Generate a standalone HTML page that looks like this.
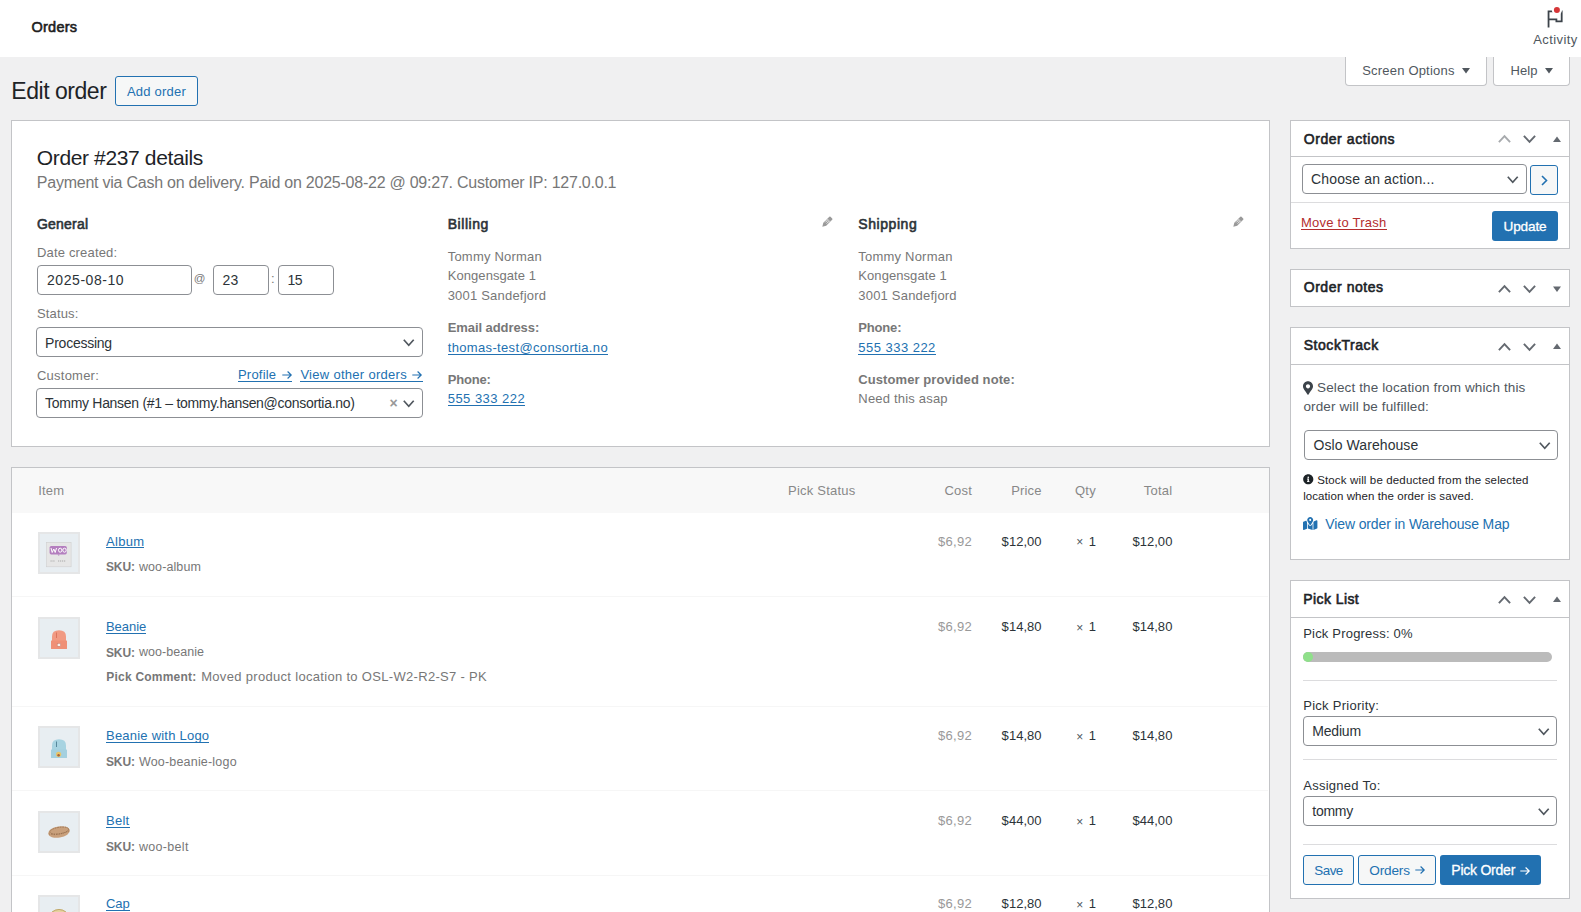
<!DOCTYPE html><html><head><meta charset="utf-8"><style>
html,body{margin:0;padding:0;}
body{width:1581px;height:912px;overflow:hidden;position:relative;background:#f0f0f1;font-family:"Liberation Sans",sans-serif;}
</style></head><body>
<div style="position:absolute;left:0px;top:0px;width:1581px;height:57px;box-sizing:border-box;background:#fff;"></div>
<svg style="position:absolute;left:1540px;top:2px" width="30" height="30" viewBox="0 0 30 30">
<path d="M8.55 25.4 V9.4 H21.7 V19.4 H16.4 V17.3 H8.55" fill="none" stroke="#3c434a" stroke-width="1.8"/>
<circle cx="16.9" cy="7.9" r="5.1" fill="#fff"/><circle cx="16.9" cy="7.9" r="3" fill="#d63638"/>
</svg>
<div style="position:absolute;left:1345px;top:57px;width:142px;height:29px;box-sizing:border-box;background:#fff;border:1px solid #c3c4c7;border-top:none;border-radius:0 0 4px 4px;"></div>
<svg style="position:absolute;left:1462px;top:68px" width="8" height="6"><path d="M0 0 H8 L4 5.5 Z" fill="#50575e"/></svg>
<div style="position:absolute;left:1493px;top:57px;width:77px;height:29px;box-sizing:border-box;background:#fff;border:1px solid #c3c4c7;border-top:none;border-radius:0 0 4px 4px;"></div>
<svg style="position:absolute;left:1545.3px;top:68px" width="8" height="6"><path d="M0 0 H8 L4 5.5 Z" fill="#50575e"/></svg>
<div style="position:absolute;left:115px;top:76px;width:83px;height:30px;box-sizing:border-box;background:#f6f7f7;border:1px solid #2271b1;border-radius:3px;"></div>
<div style="position:absolute;left:11px;top:120px;width:1259px;height:327px;box-sizing:border-box;background:#fff;border:1px solid #c3c4c7;"></div>
<div style="position:absolute;left:37px;top:265px;width:155px;height:30px;box-sizing:border-box;border:1px solid #8c8f94;border-radius:4px;background:#fff;"></div>
<div style="position:absolute;left:213px;top:265px;width:56px;height:30px;box-sizing:border-box;border:1px solid #8c8f94;border-radius:4px;background:#fff;"></div>
<div style="position:absolute;left:278px;top:265px;width:56px;height:30px;box-sizing:border-box;border:1px solid #8c8f94;border-radius:4px;background:#fff;"></div>
<div style="position:absolute;left:36px;top:327px;width:387px;height:30px;box-sizing:border-box;border:1px solid #8c8f94;border-radius:4px;background:#fff;"></div>
<svg style="position:absolute;left:403.3px;top:338.5px;overflow:visible" width="11.5" height="7"><path d="M0.8 0.8 L5.75 6.2 L10.7 0.8" fill="none" stroke="#50575e" stroke-width="1.7"/></svg>
<div style="position:absolute;left:238.0px;top:381px;width:53.8px;height:1px;background:#2271b1"></div>
<div style="position:absolute;left:300.4px;top:381px;width:122.3px;height:1px;background:#2271b1"></div>
<div style="position:absolute;left:36px;top:388px;width:387px;height:30px;box-sizing:border-box;border:1px solid #8c8f94;border-radius:4px;background:#fff;"></div>
<svg style="position:absolute;left:403.3px;top:400px;overflow:visible" width="11.5" height="7"><path d="M0.8 0.8 L5.75 6.2 L10.7 0.8" fill="none" stroke="#50575e" stroke-width="1.7"/></svg>
<svg style="position:absolute;left:821.8px;top:215.5px" width="11" height="11" viewBox="0 0 11 11">
<path d="M0.3 10.7 L1.3 6.8 L7.3 0.8 Q7.9 0.3 8.5 0.8 L10.2 2.5 Q10.7 3.1 10.2 3.7 L4.2 9.7 Z" fill="#999"/>
<path d="M3 6.6 L6.3 3.3 M4.3 7.9 L7.6 4.6 M3.6 4.3 L6.4 7.1 M4.8 3.1 L7.6 5.9" stroke="#fff" stroke-width="0.55"/></svg>
<svg style="position:absolute;left:1232.6px;top:215.5px" width="11" height="11" viewBox="0 0 11 11">
<path d="M0.3 10.7 L1.3 6.8 L7.3 0.8 Q7.9 0.3 8.5 0.8 L10.2 2.5 Q10.7 3.1 10.2 3.7 L4.2 9.7 Z" fill="#999"/>
<path d="M3 6.6 L6.3 3.3 M4.3 7.9 L7.6 4.6 M3.6 4.3 L6.4 7.1 M4.8 3.1 L7.6 5.9" stroke="#fff" stroke-width="0.55"/></svg>
<div style="position:absolute;left:447.7px;top:354px;width:160.3px;height:1px;background:#2271b1"></div>
<div style="position:absolute;left:447.7px;top:405px;width:77.5px;height:1px;background:#2271b1"></div>
<div style="position:absolute;left:858.3px;top:354px;width:77.5px;height:1px;background:#2271b1"></div>
<div style="position:absolute;left:11px;top:467px;width:1259px;height:533px;box-sizing:border-box;background:#fff;border:1px solid #c3c4c7;"></div>
<div style="position:absolute;left:12px;top:468px;width:1257px;height:45px;box-sizing:border-box;background:#f8f8f8;"></div>
<div style="position:absolute;left:38px;top:532px;width:42px;height:42px;box-sizing:border-box;background:#e8eef2;border:2px solid #e5e6e7;"></div>
<svg style="position:absolute;left:38px;top:532px" width="42" height="42" viewBox="0 0 42 42"><rect x="8.6" y="10.3" width="24.5" height="24.5" fill="#e6e6e6" stroke="#cfcfcf" stroke-width="0.6"/><rect x="11.6" y="13.9" width="17.2" height="8.5" rx="1.6" fill="#b47fbf"/><path d="M13 16 L14.2 20.5 L15.8 17 L17.2 20.5 L18.5 16 M20.5 18.2 a1.7 2 0 1 0 3.4 0 a1.7 2 0 1 0 -3.4 0 M24.8 18.2 a1.7 2 0 1 0 3.4 0 a1.7 2 0 1 0 -3.4 0" fill="none" stroke="#fff" stroke-width="1"/><path d="M19.5 22.4 L21 24 L21.5 22.4" fill="#b47fbf"/><path d="M12.5 29 H17 M20 29 H28" stroke="#999" stroke-width="0.8" stroke-dasharray="1.2 0.8"/></svg>
<div style="position:absolute;left:106.0px;top:547px;width:38.3px;height:1px;background:#2271b1"></div>
<div style="position:absolute;left:12px;top:596px;width:1256px;height:1px;box-sizing:border-box;background:#f6f6f6;"></div>
<div style="position:absolute;left:38px;top:617px;width:42px;height:42px;box-sizing:border-box;background:#e8eef2;border:2px solid #e5e6e7;"></div>
<svg style="position:absolute;left:38px;top:617px" width="42" height="42" viewBox="0 0 42 42"><path d="M14 24 V19.5 Q14 13.2 21 13.2 Q28 13.2 28 19.5 V24 Z" fill="#f19a83"/><rect x="13" y="23.5" width="16" height="8.6" rx="0.5" fill="#ef9077"/><path d="M18.5 15.5 V21" stroke="#d9705a" stroke-width="0.9"/><rect x="19.2" y="26.3" width="3.5" height="3" fill="#f7efe9" stroke="#c7705f" stroke-width="0.5"/></svg>
<div style="position:absolute;left:106.0px;top:633px;width:40.2px;height:1px;background:#2271b1"></div>
<div style="position:absolute;left:12px;top:706px;width:1256px;height:1px;box-sizing:border-box;background:#f6f6f6;"></div>
<div style="position:absolute;left:38px;top:726px;width:42px;height:42px;box-sizing:border-box;background:#e8eef2;border:2px solid #e5e6e7;"></div>
<svg style="position:absolute;left:38px;top:726px" width="42" height="42" viewBox="0 0 42 42"><path d="M14 24 V19.5 Q14 13.2 21 13.2 Q28 13.2 28 19.5 V24 Z" fill="#a7d3e1"/><rect x="13" y="23.5" width="16" height="8.6" rx="0.5" fill="#a4d0df"/><path d="M18.5 15.5 V21" stroke="#4e7f94" stroke-width="0.9"/><circle cx="20.6" cy="28.3" r="2.6" fill="#e8c56a"/><circle cx="20.6" cy="29.3" r="1.2" fill="#a8643b"/></svg>
<div style="position:absolute;left:106.0px;top:742px;width:103.3px;height:1px;background:#2271b1"></div>
<div style="position:absolute;left:12px;top:790px;width:1256px;height:1px;box-sizing:border-box;background:#f6f6f6;"></div>
<div style="position:absolute;left:38px;top:811px;width:42px;height:42px;box-sizing:border-box;background:#e8eef2;border:2px solid #e5e6e7;"></div>
<svg style="position:absolute;left:38px;top:811px" width="42" height="42" viewBox="0 0 42 42"><ellipse cx="21" cy="21" rx="11" ry="5.6" transform="rotate(-9 21 21)" fill="#c9a07c"/><ellipse cx="21.5" cy="19.6" rx="9.5" ry="3.2" transform="rotate(-9 21 21)" fill="none" stroke="#9c7452" stroke-width="0.9" stroke-dasharray="1.6 0.9"/><path d="M11 23 Q20 25 31 20" stroke="#8c6446" stroke-width="0.7" fill="none" stroke-dasharray="1.2 1.2"/></svg>
<div style="position:absolute;left:106.0px;top:827px;width:23.5px;height:1px;background:#2271b1"></div>
<div style="position:absolute;left:12px;top:875px;width:1256px;height:1px;box-sizing:border-box;background:#f6f6f6;"></div>
<div style="position:absolute;left:38px;top:895px;width:42px;height:42px;box-sizing:border-box;background:#e8eef2;border:2px solid #e5e6e7;"></div>
<svg style="position:absolute;left:38px;top:895px" width="42" height="42" viewBox="0 0 42 42"><path d="M12.5 21 A8.5 7 0 0 1 29.5 21 Z" fill="#e6d29f"/><path d="M14 17 Q21 12 28 17" stroke="#b49a5a" stroke-width="0.8" fill="none"/></svg>
<div style="position:absolute;left:106.0px;top:910px;width:23.5px;height:1px;background:#2271b1"></div>
<div style="position:absolute;left:1290px;top:120px;width:280px;height:129px;box-sizing:border-box;background:#fff;border:1px solid #c3c4c7;"></div>
<div style="position:absolute;left:1291px;top:156px;width:278px;height:1px;box-sizing:border-box;background:#c3c4c7;"></div>
<svg style="position:absolute;left:1497.5px;top:135.3px;overflow:visible" width="13" height="8"><path d="M0.9 7.2 L6.5 1.2 L12.1 7.2" fill="none" stroke="#a7aaad" stroke-width="1.9"/></svg>
<svg style="position:absolute;left:1523.3px;top:135.3px;overflow:visible" width="13" height="8"><path d="M0.9 0.8 L6.5 6.8 L12.1 0.8" fill="none" stroke="#646970" stroke-width="1.9"/></svg>
<svg style="position:absolute;left:1552.6px;top:135.5px" width="8" height="7"><path d="M0 6 H8 L4 0.5 Z" fill="#646970"/></svg>
<div style="position:absolute;left:1302px;top:164px;width:225px;height:30px;box-sizing:border-box;border:1px solid #8c8f94;border-radius:4px;background:#fff;"></div>
<svg style="position:absolute;left:1507px;top:175.5px;overflow:visible" width="11.5" height="7"><path d="M0.8 0.8 L5.75 6.2 L10.7 0.8" fill="none" stroke="#50575e" stroke-width="1.7"/></svg>
<div style="position:absolute;left:1530px;top:165px;width:28px;height:30px;box-sizing:border-box;border:1px solid #2271b1;border-radius:3px;background:#f6f7f7;"></div>
<svg style="position:absolute;left:1540.5px;top:175px" width="7" height="11"><path d="M1 1 L5.5 5.5 L1 10" fill="none" stroke="#2271b1" stroke-width="1.6"/></svg>
<div style="position:absolute;left:1291px;top:202px;width:278px;height:1px;box-sizing:border-box;background:#dcdcde;"></div>
<div style="position:absolute;left:1301.0px;top:229px;width:85.5px;height:1px;background:#b32d2e"></div>
<div style="position:absolute;left:1492px;top:211px;width:66px;height:30px;box-sizing:border-box;background:#2271b1;border-radius:3px;"></div>
<div style="position:absolute;left:1290px;top:269px;width:280px;height:38px;box-sizing:border-box;background:#fff;border:1px solid #c3c4c7;"></div>
<svg style="position:absolute;left:1497.5px;top:284.6px;overflow:visible" width="13" height="8"><path d="M0.9 7.2 L6.5 1.2 L12.1 7.2" fill="none" stroke="#646970" stroke-width="1.9"/></svg>
<svg style="position:absolute;left:1523.3px;top:284.6px;overflow:visible" width="13" height="8"><path d="M0.9 0.8 L6.5 6.8 L12.1 0.8" fill="none" stroke="#646970" stroke-width="1.9"/></svg>
<svg style="position:absolute;left:1552.6px;top:285.8px" width="8" height="7"><path d="M0 0.5 H8 L4 6 Z" fill="#646970"/></svg>
<div style="position:absolute;left:1290px;top:327px;width:280px;height:233px;box-sizing:border-box;background:#fff;border:1px solid #c3c4c7;"></div>
<div style="position:absolute;left:1291px;top:364px;width:278px;height:1px;box-sizing:border-box;background:#c3c4c7;"></div>
<svg style="position:absolute;left:1497.5px;top:342.6px;overflow:visible" width="13" height="8"><path d="M0.9 7.2 L6.5 1.2 L12.1 7.2" fill="none" stroke="#646970" stroke-width="1.9"/></svg>
<svg style="position:absolute;left:1523.3px;top:342.6px;overflow:visible" width="13" height="8"><path d="M0.9 0.8 L6.5 6.8 L12.1 0.8" fill="none" stroke="#646970" stroke-width="1.9"/></svg>
<svg style="position:absolute;left:1552.6px;top:342.8px" width="8" height="7"><path d="M0 6 H8 L4 0.5 Z" fill="#646970"/></svg>
<svg style="position:absolute;left:1303.4px;top:380.5px" width="10" height="14" viewBox="0 0 384 512"><path fill="#3c434a" d="M172.3 501.7C27 291 0 269.4 0 192 0 86 86 0 192 0s192 86 192 192c0 77.4-27 99-172.3 309.7-9.5 13.8-29.9 13.8-39.5 0zM192 272c44.2 0 80-35.8 80-80s-35.8-80-80-80-80 35.8-80 80 35.8 80 80 80z"/></svg>
<div style="position:absolute;left:1304px;top:430px;width:254px;height:30px;box-sizing:border-box;border:1px solid #8c8f94;border-radius:4px;background:#fff;"></div>
<svg style="position:absolute;left:1538.5px;top:441.5px;overflow:visible" width="11.5" height="7"><path d="M0.8 0.8 L5.75 6.2 L10.7 0.8" fill="none" stroke="#50575e" stroke-width="1.7"/></svg>
<svg style="position:absolute;left:1303px;top:474px" width="10.5" height="10.5" viewBox="0 0 512 512"><path fill="#1d2327" d="M256 8C119 8 8 119 8 256s111 248 248 248 248-111 248-248S393 8 256 8zm0 110c23.2 0 42 18.8 42 42s-18.8 42-42 42-42-18.8-42-42 18.8-42 42-42zm56 254c0 6.6-5.4 12-12 12h-88c-6.6 0-12-5.4-12-12v-24c0-6.6 5.4-12 12-12h12v-64h-12c-6.6 0-12-5.4-12-12v-24c0-6.6 5.4-12 12-12h64c6.6 0 12 5.4 12 12v100h12c6.6 0 12 5.4 12 12v24z"/></svg>
<svg style="position:absolute;left:1303px;top:517.3px" width="16" height="13.2" preserveAspectRatio="none" viewBox="0 0 640 512"><path fill="#2271b1" d="M408 120c0 54.6-73.1 151.9-105.2 192c-7.7 9.6-22 9.6-29.6 0C241.1 271.9 168 174.6 168 120C168 53.7 221.7 0 288 0s120 53.7 120 120zm8 80.4c3.5-6.9 6.7-13.8 9.6-20.6c.5-1.2 1-2.5 1.5-3.7l116-46.4C558.9 123.4 576 135 576 152V422.8c0 9.8-6 18.6-15.1 22.3L416 503V200.4zM137.6 138.3c2.4 14.1 7.2 28.3 12.8 41.5c2.9 6.8 6.1 13.7 9.6 20.6V451.8L32.9 502.7C17.1 509 0 497.4 0 480.4V209.6c0-9.8 6-18.6 15.1-22.3l122.6-49zM327.8 332c13.9-17.4 35.7-45.7 56.2-77V504.3L192 449.4V255c20.5 31.3 42.3 59.6 56.2 77c20.5 25.6 59.1 25.6 79.6 0zM288 152a40 40 0 1 0 0-80 40 40 0 1 0 0 80z"/></svg>
<div style="position:absolute;left:1290px;top:580px;width:280px;height:319px;box-sizing:border-box;background:#fff;border:1px solid #c3c4c7;"></div>
<div style="position:absolute;left:1291px;top:617px;width:278px;height:1px;box-sizing:border-box;background:#c3c4c7;"></div>
<svg style="position:absolute;left:1497.5px;top:595.5999999999999px;overflow:visible" width="13" height="8"><path d="M0.9 7.2 L6.5 1.2 L12.1 7.2" fill="none" stroke="#646970" stroke-width="1.9"/></svg>
<svg style="position:absolute;left:1523.3px;top:595.5999999999999px;overflow:visible" width="13" height="8"><path d="M0.9 0.8 L6.5 6.8 L12.1 0.8" fill="none" stroke="#646970" stroke-width="1.9"/></svg>
<svg style="position:absolute;left:1552.6px;top:595.8px" width="8" height="7"><path d="M0 6 H8 L4 0.5 Z" fill="#646970"/></svg>
<div style="position:absolute;left:1303px;top:652px;width:249px;height:10px;box-sizing:border-box;background:#bbb;border-radius:5px;"></div>
<div style="position:absolute;left:1303px;top:652px;width:10px;height:10px;box-sizing:border-box;background:#8fe08a;border-radius:5px;"></div>
<div style="position:absolute;left:1303px;top:680px;width:254px;height:1px;box-sizing:border-box;background:#dcdcde;"></div>
<div style="position:absolute;left:1303px;top:716px;width:254px;height:30px;box-sizing:border-box;border:1px solid #8c8f94;border-radius:4px;background:#fff;"></div>
<svg style="position:absolute;left:1537.8px;top:728px;overflow:visible" width="11.5" height="7"><path d="M0.8 0.8 L5.75 6.2 L10.7 0.8" fill="none" stroke="#50575e" stroke-width="1.7"/></svg>
<div style="position:absolute;left:1303px;top:759px;width:254px;height:1px;box-sizing:border-box;background:#dcdcde;"></div>
<div style="position:absolute;left:1303px;top:796px;width:254px;height:30px;box-sizing:border-box;border:1px solid #8c8f94;border-radius:4px;background:#fff;"></div>
<svg style="position:absolute;left:1537.8px;top:807.5px;overflow:visible" width="11.5" height="7"><path d="M0.8 0.8 L5.75 6.2 L10.7 0.8" fill="none" stroke="#50575e" stroke-width="1.7"/></svg>
<div style="position:absolute;left:1303px;top:844px;width:254px;height:1px;box-sizing:border-box;background:#dcdcde;"></div>
<div style="position:absolute;left:1303px;top:855px;width:51px;height:30px;box-sizing:border-box;border:1px solid #2271b1;border-radius:3px;background:#f6f7f7;"></div>
<div style="position:absolute;left:1358px;top:855px;width:78px;height:30px;box-sizing:border-box;border:1px solid #2271b1;border-radius:3px;background:#f6f7f7;"></div>
<div style="position:absolute;left:1440px;top:855px;width:101px;height:30px;box-sizing:border-box;background:#2271b1;border-radius:3px;"></div>
<div id=t0 style="position:absolute;left:31.6px;top:19.72px;font-size:14.5px;line-height:14.5px;font-weight:400;-webkit-text-stroke:0.6px #1e1e1e;color:#1e1e1e;white-space:nowrap;letter-spacing:0.212px;">Orders</div>
<div id=t1 style="position:absolute;left:1533.2px;top:32.59px;font-size:13px;line-height:13px;font-weight:400;color:#50575e;white-space:nowrap;letter-spacing:0.404px;">Activity</div>
<div id=t2 style="position:absolute;left:1362.2px;top:63.59px;font-size:13px;line-height:13px;font-weight:400;color:#50575e;white-space:nowrap;letter-spacing:0.199px;">Screen Options</div>
<div id=t3 style="position:absolute;left:1510.5px;top:63.59px;font-size:13px;line-height:13px;font-weight:400;color:#50575e;white-space:nowrap;letter-spacing:0.088px;">Help</div>
<div id=t4 style="position:absolute;left:11.3px;top:79.73px;font-size:23px;line-height:23px;font-weight:400;color:#1d2327;white-space:nowrap;letter-spacing:-0.462px;">Edit order</div>
<div id=t5 style="position:absolute;left:126.9px;top:84.79px;font-size:13px;line-height:13px;font-weight:400;color:#2271b1;white-space:nowrap;letter-spacing:0.234px;">Add order</div>
<div id=t6 style="position:absolute;left:36.8px;top:147.22px;font-size:21px;line-height:21px;font-weight:400;color:#1d2327;white-space:nowrap;letter-spacing:-0.366px;">Order #237 details</div>
<div id=t7 style="position:absolute;left:36.8px;top:175.15px;font-size:16px;line-height:16px;font-weight:400;color:#777;white-space:nowrap;letter-spacing:-0.238px;">Payment via Cash on delivery. Paid on 2025-08-22 @ 09:27. Customer IP: 127.0.0.1</div>
<div id=t8 style="position:absolute;left:37px;top:217.15px;font-size:14px;line-height:14px;font-weight:400;-webkit-text-stroke:0.6px #2c3338;color:#2c3338;white-space:nowrap;letter-spacing:0.198px;">General</div>
<div id=t9 style="position:absolute;left:37px;top:245.99px;font-size:13px;line-height:13px;font-weight:400;color:#777;white-space:nowrap;letter-spacing:0.173px;">Date created:</div>
<div id=t10 style="position:absolute;left:47px;top:272.75px;font-size:14px;line-height:14px;font-weight:400;color:#2c3338;white-space:nowrap;letter-spacing:0.558px;">2025-08-10</div>
<div id=t11 style="position:absolute;left:193.8px;top:273.26px;font-size:11.5px;line-height:11.5px;font-weight:400;color:#777;white-space:nowrap;letter-spacing:0.000px;">@</div>
<div id=t12 style="position:absolute;left:222.6px;top:272.75px;font-size:14px;line-height:14px;font-weight:400;color:#2c3338;white-space:nowrap;letter-spacing:0.211px;">23</div>
<div id=t13 style="position:absolute;left:271px;top:271.99px;font-size:13px;line-height:13px;font-weight:400;color:#777;white-space:nowrap;letter-spacing:0.000px;">:</div>
<div id=t14 style="position:absolute;left:287.6px;top:272.75px;font-size:14px;line-height:14px;font-weight:400;color:#2c3338;white-space:nowrap;letter-spacing:-0.539px;">15</div>
<div id=t15 style="position:absolute;left:37px;top:307.29px;font-size:13px;line-height:13px;font-weight:400;color:#777;white-space:nowrap;letter-spacing:0.147px;">Status:</div>
<div id=t16 style="position:absolute;left:45.1px;top:335.65px;font-size:14px;line-height:14px;font-weight:400;color:#2c3338;white-space:nowrap;letter-spacing:-0.247px;">Processing</div>
<div id=t17 style="position:absolute;left:37px;top:369.29px;font-size:13px;line-height:13px;font-weight:400;color:#777;white-space:nowrap;letter-spacing:0.226px;">Customer:</div>
<div id=t18 style="position:absolute;left:238px;top:368.49px;font-size:13px;line-height:13px;font-weight:400;color:#2271b1;white-space:nowrap;letter-spacing:0.203px;">Profile <svg width="10" height="8" viewBox="0 0 10 8" style="display:inline-block;vertical-align:0.2px;overflow:visible;margin-left:1.5px"><path d="M0.3 4 H9.2 M5.6 0.5 L9.2 4 L5.6 7.5" fill="none" stroke="#2271b1" stroke-width="1.15"/></svg></div>
<div id=t19 style="position:absolute;left:300.4px;top:368.49px;font-size:13px;line-height:13px;font-weight:400;color:#2271b1;white-space:nowrap;letter-spacing:0.291px;">View other orders <svg width="10" height="8" viewBox="0 0 10 8" style="display:inline-block;vertical-align:0.2px;overflow:visible;margin-left:1.5px"><path d="M0.3 4 H9.2 M5.6 0.5 L9.2 4 L5.6 7.5" fill="none" stroke="#2271b1" stroke-width="1.15"/></svg></div>
<div id=t20 style="position:absolute;left:45.1px;top:396.35px;font-size:14px;line-height:14px;font-weight:400;color:#2c3338;white-space:nowrap;letter-spacing:-0.297px;">Tommy Hansen (#1 – tommy.hansen@consortia.no)</div>
<div id=t21 style="position:absolute;left:389.5px;top:395.65px;font-size:14px;line-height:14px;font-weight:700;color:#999;white-space:nowrap;letter-spacing:0.000px;">×</div>
<div id=t22 style="position:absolute;left:447.7px;top:217.45px;font-size:14px;line-height:14px;font-weight:400;-webkit-text-stroke:0.6px #2c3338;color:#2c3338;white-space:nowrap;letter-spacing:0.549px;">Billing</div>
<div id=t23 style="position:absolute;left:447.7px;top:249.99px;font-size:13px;line-height:13px;font-weight:400;color:#777;white-space:nowrap;letter-spacing:0.212px;">Tommy Norman</div>
<div id=t24 style="position:absolute;left:447.7px;top:269.19px;font-size:13px;line-height:13px;font-weight:400;color:#777;white-space:nowrap;letter-spacing:0.072px;">Kongensgate 1</div>
<div id=t25 style="position:absolute;left:447.7px;top:288.99px;font-size:13px;line-height:13px;font-weight:400;color:#777;white-space:nowrap;letter-spacing:0.205px;">3001 Sandefjord</div>
<div id=t26 style="position:absolute;left:858.3px;top:217.45px;font-size:14px;line-height:14px;font-weight:400;-webkit-text-stroke:0.6px #2c3338;color:#2c3338;white-space:nowrap;letter-spacing:0.562px;">Shipping</div>
<div id=t27 style="position:absolute;left:858.3px;top:249.99px;font-size:13px;line-height:13px;font-weight:400;color:#777;white-space:nowrap;letter-spacing:0.212px;">Tommy Norman</div>
<div id=t28 style="position:absolute;left:858.3px;top:269.19px;font-size:13px;line-height:13px;font-weight:400;color:#777;white-space:nowrap;letter-spacing:0.072px;">Kongensgate 1</div>
<div id=t29 style="position:absolute;left:858.3px;top:288.99px;font-size:13px;line-height:13px;font-weight:400;color:#777;white-space:nowrap;letter-spacing:0.205px;">3001 Sandefjord</div>
<div id=t30 style="position:absolute;left:447.7px;top:320.69px;font-size:13px;line-height:13px;font-weight:700;color:#777;white-space:nowrap;letter-spacing:-0.071px;">Email address:</div>
<div id=t31 style="position:absolute;left:447.7px;top:340.99px;font-size:13px;line-height:13px;font-weight:400;color:#2271b1;white-space:nowrap;letter-spacing:0.348px;">thomas-test@consortia.no</div>
<div id=t32 style="position:absolute;left:447.7px;top:372.99px;font-size:13px;line-height:13px;font-weight:700;color:#777;white-space:nowrap;letter-spacing:-0.177px;">Phone:</div>
<div id=t33 style="position:absolute;left:447.7px;top:392.39px;font-size:13px;line-height:13px;font-weight:400;color:#2271b1;white-space:nowrap;letter-spacing:0.473px;">555 333 222</div>
<div id=t34 style="position:absolute;left:858.3px;top:320.69px;font-size:13px;line-height:13px;font-weight:700;color:#777;white-space:nowrap;letter-spacing:-0.177px;">Phone:</div>
<div id=t35 style="position:absolute;left:858.3px;top:340.99px;font-size:13px;line-height:13px;font-weight:400;color:#2271b1;white-space:nowrap;letter-spacing:0.473px;">555 333 222</div>
<div id=t36 style="position:absolute;left:858.3px;top:372.99px;font-size:13px;line-height:13px;font-weight:700;color:#777;white-space:nowrap;letter-spacing:0.084px;">Customer provided note:</div>
<div id=t37 style="position:absolute;left:858.3px;top:392.39px;font-size:13px;line-height:13px;font-weight:400;color:#777;white-space:nowrap;letter-spacing:0.198px;">Need this asap</div>
<div id=t38 style="position:absolute;left:38.2px;top:484.29px;font-size:13px;line-height:13px;font-weight:400;color:#888;white-space:nowrap;letter-spacing:0.226px;">Item</div>
<div id=t39 style="position:absolute;left:788px;top:484.29px;font-size:13px;line-height:13px;font-weight:400;color:#888;white-space:nowrap;letter-spacing:0.224px;">Pick Status</div>
<div id=t40 style="position:absolute;right:609px;top:484.29px;font-size:13px;line-height:13px;font-weight:400;color:#888;white-space:nowrap;letter-spacing:0.216px;">Cost</div>
<div id=t41 style="position:absolute;right:539.4000000000001px;top:484.29px;font-size:13px;line-height:13px;font-weight:400;color:#888;white-space:nowrap;letter-spacing:0.155px;">Price</div>
<div id=t42 style="position:absolute;right:485px;top:484.29px;font-size:13px;line-height:13px;font-weight:400;color:#888;white-space:nowrap;letter-spacing:0.255px;">Qty</div>
<div id=t43 style="position:absolute;right:408.5999999999999px;top:484.29px;font-size:13px;line-height:13px;font-weight:400;color:#888;white-space:nowrap;letter-spacing:0.226px;">Total</div>
<div id=t44 style="position:absolute;left:106px;top:534.79px;font-size:13px;line-height:13px;font-weight:400;color:#2271b1;white-space:nowrap;letter-spacing:0.288px;">Album</div>
<div id=t45 style="position:absolute;left:106px;top:561.44px;font-size:12px;line-height:12px;font-weight:700;color:#777;white-space:nowrap;letter-spacing:-0.136px;">SKU:</div>
<div id=t46 style="position:absolute;left:138.9px;top:561.02px;font-size:12.5px;line-height:12.5px;font-weight:400;color:#777;white-space:nowrap;letter-spacing:0.107px;">woo-album</div>
<div id=t47 style="position:absolute;right:609px;top:534.59px;font-size:13px;line-height:13px;font-weight:400;color:#999;white-space:nowrap;letter-spacing:0.291px;">$6,92</div>
<div id=t48 style="position:absolute;right:539.4000000000001px;top:534.59px;font-size:13px;line-height:13px;font-weight:400;color:#2c3338;white-space:nowrap;letter-spacing:0.039px;">$12,00</div>
<div id=t49 style="position:absolute;left:1076.2px;top:536.24px;font-size:12px;line-height:12px;font-weight:400;color:#50575e;white-space:nowrap;letter-spacing:0.000px;">×</div>
<div id=t50 style="position:absolute;right:485px;top:534.59px;font-size:13px;line-height:13px;font-weight:400;color:#2c3338;white-space:nowrap;letter-spacing:0.000px;">1</div>
<div id=t51 style="position:absolute;right:408.5999999999999px;top:534.59px;font-size:13px;line-height:13px;font-weight:400;color:#2c3338;white-space:nowrap;letter-spacing:0.039px;">$12,00</div>
<div id=t52 style="position:absolute;left:106px;top:620.09px;font-size:13px;line-height:13px;font-weight:400;color:#2271b1;white-space:nowrap;letter-spacing:-0.047px;">Beanie</div>
<div id=t53 style="position:absolute;left:106px;top:646.74px;font-size:12px;line-height:12px;font-weight:700;color:#777;white-space:nowrap;letter-spacing:-0.136px;">SKU:</div>
<div id=t54 style="position:absolute;left:138.9px;top:646.32px;font-size:12.5px;line-height:12.5px;font-weight:400;color:#777;white-space:nowrap;letter-spacing:0.056px;">woo-beanie</div>
<div id=t55 style="position:absolute;right:609px;top:619.89px;font-size:13px;line-height:13px;font-weight:400;color:#999;white-space:nowrap;letter-spacing:0.291px;">$6,92</div>
<div id=t56 style="position:absolute;right:539.4000000000001px;top:619.89px;font-size:13px;line-height:13px;font-weight:400;color:#2c3338;white-space:nowrap;letter-spacing:0.039px;">$14,80</div>
<div id=t57 style="position:absolute;left:1076.2px;top:621.54px;font-size:12px;line-height:12px;font-weight:400;color:#50575e;white-space:nowrap;letter-spacing:0.000px;">×</div>
<div id=t58 style="position:absolute;right:485px;top:619.89px;font-size:13px;line-height:13px;font-weight:400;color:#2c3338;white-space:nowrap;letter-spacing:0.000px;">1</div>
<div id=t59 style="position:absolute;right:408.5999999999999px;top:619.89px;font-size:13px;line-height:13px;font-weight:400;color:#2c3338;white-space:nowrap;letter-spacing:0.039px;">$14,80</div>
<div id=t60 style="position:absolute;left:106px;top:729.49px;font-size:13px;line-height:13px;font-weight:400;color:#2271b1;white-space:nowrap;letter-spacing:0.222px;">Beanie with Logo</div>
<div id=t61 style="position:absolute;left:106px;top:756.14px;font-size:12px;line-height:12px;font-weight:700;color:#777;white-space:nowrap;letter-spacing:-0.136px;">SKU:</div>
<div id=t62 style="position:absolute;left:138.9px;top:755.72px;font-size:12.5px;line-height:12.5px;font-weight:400;color:#777;white-space:nowrap;letter-spacing:0.194px;">Woo-beanie-logo</div>
<div id=t63 style="position:absolute;right:609px;top:729.29px;font-size:13px;line-height:13px;font-weight:400;color:#999;white-space:nowrap;letter-spacing:0.291px;">$6,92</div>
<div id=t64 style="position:absolute;right:539.4000000000001px;top:729.29px;font-size:13px;line-height:13px;font-weight:400;color:#2c3338;white-space:nowrap;letter-spacing:0.039px;">$14,80</div>
<div id=t65 style="position:absolute;left:1076.2px;top:730.94px;font-size:12px;line-height:12px;font-weight:400;color:#50575e;white-space:nowrap;letter-spacing:0.000px;">×</div>
<div id=t66 style="position:absolute;right:485px;top:729.29px;font-size:13px;line-height:13px;font-weight:400;color:#2c3338;white-space:nowrap;letter-spacing:0.000px;">1</div>
<div id=t67 style="position:absolute;right:408.5999999999999px;top:729.29px;font-size:13px;line-height:13px;font-weight:400;color:#2c3338;white-space:nowrap;letter-spacing:0.039px;">$14,80</div>
<div id=t68 style="position:absolute;left:106px;top:814.49px;font-size:13px;line-height:13px;font-weight:400;color:#2271b1;white-space:nowrap;letter-spacing:0.273px;">Belt</div>
<div id=t69 style="position:absolute;left:106px;top:841.14px;font-size:12px;line-height:12px;font-weight:700;color:#777;white-space:nowrap;letter-spacing:-0.136px;">SKU:</div>
<div id=t70 style="position:absolute;left:138.9px;top:840.72px;font-size:12.5px;line-height:12.5px;font-weight:400;color:#777;white-space:nowrap;letter-spacing:0.319px;">woo-belt</div>
<div id=t71 style="position:absolute;right:609px;top:814.29px;font-size:13px;line-height:13px;font-weight:400;color:#999;white-space:nowrap;letter-spacing:0.291px;">$6,92</div>
<div id=t72 style="position:absolute;right:539.4000000000001px;top:814.29px;font-size:13px;line-height:13px;font-weight:400;color:#2c3338;white-space:nowrap;letter-spacing:0.039px;">$44,00</div>
<div id=t73 style="position:absolute;left:1076.2px;top:815.94px;font-size:12px;line-height:12px;font-weight:400;color:#50575e;white-space:nowrap;letter-spacing:0.000px;">×</div>
<div id=t74 style="position:absolute;right:485px;top:814.29px;font-size:13px;line-height:13px;font-weight:400;color:#2c3338;white-space:nowrap;letter-spacing:0.000px;">1</div>
<div id=t75 style="position:absolute;right:408.5999999999999px;top:814.29px;font-size:13px;line-height:13px;font-weight:400;color:#2c3338;white-space:nowrap;letter-spacing:0.039px;">$44,00</div>
<div id=t76 style="position:absolute;left:106px;top:897.49px;font-size:13px;line-height:13px;font-weight:400;color:#2271b1;white-space:nowrap;letter-spacing:-0.120px;">Cap</div>
<div id=t77 style="position:absolute;left:106px;top:924.14px;font-size:12px;line-height:12px;font-weight:700;color:#777;white-space:nowrap;letter-spacing:-0.136px;">SKU:</div>
<div id=t78 style="position:absolute;left:138.9px;top:923.72px;font-size:12.5px;line-height:12.5px;font-weight:400;color:#777;white-space:nowrap;letter-spacing:-0.021px;">woo-cap</div>
<div id=t79 style="position:absolute;right:609px;top:897.29px;font-size:13px;line-height:13px;font-weight:400;color:#999;white-space:nowrap;letter-spacing:0.291px;">$6,92</div>
<div id=t80 style="position:absolute;right:539.4000000000001px;top:897.29px;font-size:13px;line-height:13px;font-weight:400;color:#2c3338;white-space:nowrap;letter-spacing:0.039px;">$12,80</div>
<div id=t81 style="position:absolute;left:1076.2px;top:898.94px;font-size:12px;line-height:12px;font-weight:400;color:#50575e;white-space:nowrap;letter-spacing:0.000px;">×</div>
<div id=t82 style="position:absolute;right:485px;top:897.29px;font-size:13px;line-height:13px;font-weight:400;color:#2c3338;white-space:nowrap;letter-spacing:0.000px;">1</div>
<div id=t83 style="position:absolute;right:408.5999999999999px;top:897.29px;font-size:13px;line-height:13px;font-weight:400;color:#2c3338;white-space:nowrap;letter-spacing:0.039px;">$12,80</div>
<div id=t84 style="position:absolute;left:106.3px;top:670.64px;font-size:12px;line-height:12px;font-weight:700;color:#777;white-space:nowrap;letter-spacing:0.219px;">Pick Comment:</div>
<div id=t85 style="position:absolute;left:201.2px;top:669.79px;font-size:13px;line-height:13px;font-weight:400;color:#777;white-space:nowrap;letter-spacing:0.314px;">Moved product location to OSL-W2-R2-S7 - PK</div>
<div id=t86 style="position:absolute;left:1303.7px;top:131.85px;font-size:14px;line-height:14px;font-weight:400;-webkit-text-stroke:0.6px #1d2327;color:#1d2327;white-space:nowrap;letter-spacing:0.573px;">Order actions</div>
<div id=t87 style="position:absolute;left:1311px;top:172.15px;font-size:14px;line-height:14px;font-weight:400;color:#2c3338;white-space:nowrap;letter-spacing:0.150px;">Choose an action...</div>
<div id=t88 style="position:absolute;left:1301px;top:215.99px;font-size:13px;line-height:13px;font-weight:400;color:#b32d2e;white-space:nowrap;letter-spacing:0.240px;">Move to Trash</div>
<div id=t89 style="position:absolute;left:1503.5px;top:219.78px;font-size:13.6px;line-height:13.6px;font-weight:400;-webkit-text-stroke:0.3px #fff;color:#fff;white-space:nowrap;letter-spacing:-0.141px;">Update</div>
<div id=t90 style="position:absolute;left:1303.7px;top:280.15px;font-size:14px;line-height:14px;font-weight:400;-webkit-text-stroke:0.6px #1d2327;color:#1d2327;white-space:nowrap;letter-spacing:0.551px;">Order notes</div>
<div id=t91 style="position:absolute;left:1303.7px;top:338.25px;font-size:14px;line-height:14px;font-weight:400;-webkit-text-stroke:0.6px #1d2327;color:#1d2327;white-space:nowrap;letter-spacing:0.550px;">StockTrack</div>
<div id=t92 style="position:absolute;left:1317px;top:380.77px;font-size:13.5px;line-height:13.5px;font-weight:400;color:#50575e;white-space:nowrap;letter-spacing:0.125px;">Select the location from which this</div>
<div id=t93 style="position:absolute;left:1303.4px;top:399.77px;font-size:13.5px;line-height:13.5px;font-weight:400;color:#50575e;white-space:nowrap;letter-spacing:0.137px;">order will be fulfilled:</div>
<div id=t94 style="position:absolute;left:1313.5px;top:437.85px;font-size:14px;line-height:14px;font-weight:400;color:#2c3338;white-space:nowrap;letter-spacing:0.075px;">Oslo Warehouse</div>
<div id=t95 style="position:absolute;left:1317.2px;top:475.46px;font-size:11.5px;line-height:11.5px;font-weight:400;color:#1d2327;white-space:nowrap;letter-spacing:0.141px;">Stock will be deducted from the selected</div>
<div id=t96 style="position:absolute;left:1303.2px;top:491.46px;font-size:11.5px;line-height:11.5px;font-weight:400;color:#1d2327;white-space:nowrap;letter-spacing:0.071px;">location when the order is saved.</div>
<div id=t97 style="position:absolute;left:1325.3px;top:517.15px;font-size:14px;line-height:14px;font-weight:400;color:#2271b1;white-space:nowrap;letter-spacing:-0.124px;">View order in Warehouse Map</div>
<div id=t98 style="position:absolute;left:1303.2px;top:591.65px;font-size:14px;line-height:14px;font-weight:400;-webkit-text-stroke:0.6px #1d2327;color:#1d2327;white-space:nowrap;letter-spacing:0.431px;">Pick List</div>
<div id=t99 style="position:absolute;left:1303.2px;top:626.89px;font-size:13px;line-height:13px;font-weight:400;color:#2c3338;white-space:nowrap;letter-spacing:0.194px;">Pick Progress: 0%</div>
<div id=t100 style="position:absolute;left:1303.2px;top:699.49px;font-size:13px;line-height:13px;font-weight:400;color:#2c3338;white-space:nowrap;letter-spacing:0.269px;">Pick Priority:</div>
<div id=t101 style="position:absolute;left:1312.3px;top:724.15px;font-size:14px;line-height:14px;font-weight:400;color:#2c3338;white-space:nowrap;letter-spacing:-0.199px;">Medium</div>
<div id=t102 style="position:absolute;left:1303.2px;top:778.89px;font-size:13px;line-height:13px;font-weight:400;color:#2c3338;white-space:nowrap;letter-spacing:0.275px;">Assigned To:</div>
<div id=t103 style="position:absolute;left:1312.3px;top:803.95px;font-size:14px;line-height:14px;font-weight:400;color:#2c3338;white-space:nowrap;letter-spacing:-0.280px;">tommy</div>
<div id=t104 style="position:absolute;left:1314.3px;top:863.75px;font-size:13.4px;line-height:13.4px;font-weight:400;color:#2271b1;white-space:nowrap;letter-spacing:-0.508px;">Save</div>
<div id=t105 style="position:absolute;left:1369.3px;top:863.58px;font-size:13.6px;line-height:13.6px;font-weight:400;color:#2271b1;white-space:nowrap;letter-spacing:-0.166px;">Orders <svg width="10" height="8" viewBox="0 0 10 8" style="display:inline-block;vertical-align:0.2px;overflow:visible;margin-left:1.5px"><path d="M0.3 4 H9.2 M5.6 0.5 L9.2 4 L5.6 7.5" fill="none" stroke="#2271b1" stroke-width="1.15"/></svg></div>
<div id=t106 style="position:absolute;left:1451.3px;top:863.25px;font-size:14px;line-height:14px;font-weight:400;-webkit-text-stroke:0.3px #fff;color:#fff;white-space:nowrap;letter-spacing:-0.235px;">Pick Order <svg width="10" height="8" viewBox="0 0 10 8" style="display:inline-block;vertical-align:0.2px;overflow:visible;margin-left:1.5px"><path d="M0.3 4 H9.2 M5.6 0.5 L9.2 4 L5.6 7.5" fill="none" stroke="#fff" stroke-width="1.15"/></svg></div>
</body></html>
